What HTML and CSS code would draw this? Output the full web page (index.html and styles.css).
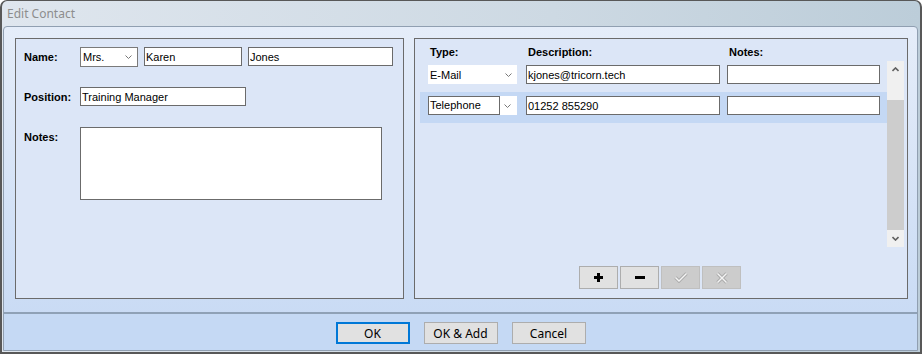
FILE: index.html
```html
<html lang="en">
<head>
  <title>Edit Contact</title>
  <link rel="stylesheet" href="styles.css">
</head>
<body>
<div class="window">
  <div class="titlebar">Edit Contact</div>
  <div class="frame">
    <div class="panels">
      <div class="panel details">
        <div class="field">
          <label>Name:</label>
          <div class="combo title-combo">
            <span class="combo-text">Mrs.</span>
            <svg class="chev" width="7" height="4" viewBox="0 0 7 4"><polyline points="0.5,0.5 3.5,3.5 6.5,0.5"/></svg>
          </div>
          <input class="box first" type="text" value="Karen">
          <input class="box last" type="text" value="Jones">
        </div>
        <div class="field position">
          <label>Position:</label>
          <input class="box role" type="text" value="Training Manager">
        </div>
        <div class="field notes">
          <label>Notes:</label>
          <textarea class="box memo"></textarea>
        </div>
      </div>

      <div class="panel methods">
        <div class="method-head">
          <span class="h-type">Type:</span>
          <span class="h-desc">Description:</span>
          <span class="h-notes">Notes:</span>
        </div>
        <div class="method-body">
          <div class="rows">
            <div class="row">
              <div class="combo type">
                <span class="combo-text">E-Mail</span>
                <svg class="chev" width="7" height="4" viewBox="0 0 7 4"><polyline points="0.5,0.5 3.5,3.5 6.5,0.5"/></svg>
              </div>
              <input class="box desc" type="text" value="kjones@tricorn.tech">
              <input class="box note" type="text" value="">
            </div>
            <div class="row selected">
              <div class="combo type">
                <span class="combo-text framed">Telephone</span>
                <svg class="chev" width="7" height="4" viewBox="0 0 7 4"><polyline points="0.5,0.5 3.5,3.5 6.5,0.5"/></svg>
              </div>
              <input class="box desc" type="text" value="01252 855290">
              <input class="box note" type="text" value="">
            </div>
          </div>
          <div class="scrollbar">
            <div class="sb-btn">
              <svg width="7" height="5" viewBox="0 0 7 5"><polyline points="0.5,4 3.5,1 6.5,4"/></svg>
            </div>
            <div class="sb-space"></div>
            <div class="sb-thumb"></div>
            <div class="sb-btn">
              <svg width="7" height="5" viewBox="0 0 7 5"><polyline points="0.5,1 3.5,4 6.5,1"/></svg>
            </div>
          </div>
        </div>
        <div class="tools">
          <button class="tool">
            <svg width="9" height="9" viewBox="0 0 9 9"><rect x="3" y="0" width="3" height="9"/><rect x="0" y="3" width="9" height="3"/></svg>
          </button>
          <button class="tool">
            <svg width="10" height="3" viewBox="0 0 10 3"><rect x="0" y="0" width="10" height="3"/></svg>
          </button>
          <button class="tool off">
            <svg width="14" height="11" viewBox="0 0 14 11"><polyline class="edge" points="1.5,5.5 5,9 12.5,1.5"/><polyline class="core" points="1.5,5.5 5,9 12.5,1.5"/></svg>
          </button>
          <button class="tool off">
            <svg width="12" height="12" viewBox="0 0 12 12"><path class="edge" d="M1.5 1.5 L10.5 10.5 M10.5 1.5 L1.5 10.5"/><path class="core" d="M1.5 1.5 L10.5 10.5 M10.5 1.5 L1.5 10.5"/></svg>
          </button>
        </div>
      </div>
    </div>

    <div class="footer">
      <button class="btn default">OK</button>
      <button class="btn">OK &amp; Add</button>
      <button class="btn">Cancel</button>
    </div>
  </div>
</div>
</body>
</html>
```

FILE: styles.css
```css
body { margin: 0; font-family: "Liberation Sans", Arial, sans-serif; font-size: 11px; }

.window {
  width: 922px;
  height: 354px;
  box-sizing: border-box;
  border: 2px solid #585858;
  border-top-width: 1px;
  border-radius: 7px 7px 0 0;
  padding: 0 2px 1px 1px;
  background: linear-gradient(to right, #dfe6ee, #cdd9e3 60%, #bccdd9);
  display: flex;
  flex-direction: column;
}

.titlebar {
  height: 25px;
  box-sizing: border-box;
  padding: 1px 0 0 4px;
  line-height: 24px;
  font-family: "Noto Sans", sans-serif;
  font-size: 12px;
  color: #8d8d8d;
}

.frame {
  flex: 1;
  border: 1px solid #909fb1;
  border-radius: 4px 4px 0 0;
  background: linear-gradient(#e5edf9, #c6d9f4);
  display: flex;
  flex-direction: column;
}

.panels {
  display: flex;
  gap: 10px;
  padding: 11px 9px 0 11px;
  margin-bottom: 13px;
}

.panel {
  box-sizing: border-box;
  height: 261px;
  border: 1px solid #6b6b6b;
  background: #dce6f7;
}

/* left panel */
.details { width: 389px; padding: 8px 0 0 8px; }

.field { display: flex; align-items: flex-start; gap: 6px; }
.field label { width: 50px; font-weight: bold; line-height: 19px; padding-top: 1px; }
.position { margin-top: 20px; }
.notes { margin-top: 20px; }
.notes label { line-height: 13px; padding-top: 4px; }

.box {
  box-sizing: border-box;
  height: 19px;
  margin: 0;
  padding: 0 1px;
  border: 1px solid #6b6b6b;
  background: #fff;
  font-family: "Liberation Sans", Arial, sans-serif;
  font-size: 11px;
  color: #000;
  outline: none;
}

.first { width: 98px; }
.last { width: 145px; }
.role { width: 166px; }
.memo { width: 302px; height: 73px; resize: none; }

.combo {
  box-sizing: border-box;
  display: flex;
  align-items: center;
  background: #fff;
}
.combo-text { flex: 1; padding-left: 2px; }
.chev { fill: none; stroke: #777; stroke-width: 1; }

.title-combo { width: 58px; height: 20px; border: 1px solid #7a7a7a; padding-right: 5px; }
.title-combo .combo-text { padding-left: 2px; }

/* right panel */
.methods { width: 494px; padding: 0 3px 0 5px; }

.method-head {
  height: 22px;
  box-sizing: border-box;
  padding: 7px 0 0 10px;
  line-height: 13px;
  font-weight: bold;
  display: flex;
}
.h-type { width: 98px; }
.h-desc { width: 201px; }

.method-body { display: flex; height: 186px; }
.rows { width: 467px; }

.row {
  height: 31px;
  box-sizing: border-box;
  padding: 4px 0 0 8px;
  display: flex;
}
.row.selected { background: #c4d8f4; }

.type { width: 89px; height: 19px; padding-right: 5px; }
.type .chev { margin-left: 4px; }
.framed {
  align-self: stretch;
  flex: 0 0 72px;
  box-sizing: border-box;
  border: 1px solid #6b6b6b;
  padding-left: 1px;
  line-height: 17px;
}
.desc { width: 194px; margin-left: 9px; }
.note { width: 153px; margin-left: 7px; }

.scrollbar {
  width: 17px;
  background: #f0f0f0;
  display: flex;
  flex-direction: column;
}
.sb-btn { height: 17px; display: flex; align-items: center; justify-content: center; }
.sb-btn svg { fill: none; stroke: #606060; stroke-width: 1.6; }
.sb-space { height: 22px; }
.sb-thumb { flex: 1; background: #cdcdcd; }

.tools {
  display: flex;
  justify-content: center;
  gap: 2px;
  margin-top: 19px;
  padding-right: 4px;
}
.tool {
  width: 39px;
  height: 23px;
  padding: 0;
  border: 1px solid #adadad;
  background: #e1e1e1;
  display: flex;
  align-items: center;
  justify-content: center;
}
.tool svg { fill: #000; }
.tool.off { background: #cccccc; border-color: #bfbfbf; }
.tool.off svg { fill: none; }
.tool .edge { stroke: #adadad; stroke-width: 3.4; }
.tool .core { stroke: #f4f4f4; stroke-width: 1.4; }

/* footer */
.footer {
  flex: 1;
  border-top: 2px solid #8fa1b6;
  background: #c5d9f4;
  display: flex;
  justify-content: center;
  align-items: flex-start;
  gap: 14px;
  padding-top: 8px;
}
.btn {
  width: 74px;
  height: 22px;
  padding: 0;
  border: 1px solid #adadad;
  background: #e1e1e1;
  font-family: "Noto Sans", sans-serif;
  font-size: 12px;
  color: #000;
}
.btn.default { border: 2px solid #0078d7; }
```
